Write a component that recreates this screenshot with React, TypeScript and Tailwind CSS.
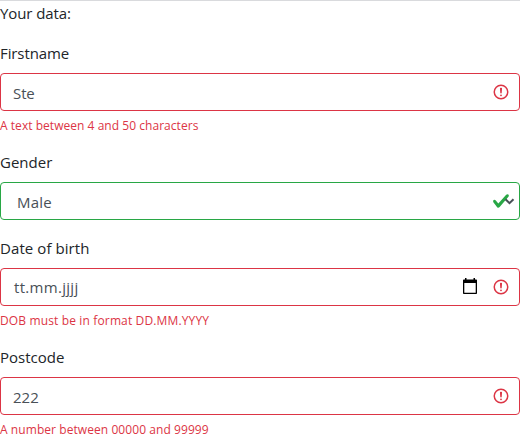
import type { ReactNode } from "react";

function InvalidIcon() {
  return (
    <svg className="h-[18px] w-[18px] shrink-0" viewBox="0 0 12 12" fill="none" stroke="#dc3545">
      <circle cx="6" cy="6" r="4.5" />
      <path strokeLinejoin="round" d="M5.8 3.6h.4L6 6.5z" />
      <circle cx="6" cy="8.2" r=".6" fill="#dc3545" stroke="none" />
    </svg>
  );
}

function ValidIcon() {
  return (
    <svg className="h-[18px] w-[18px] shrink-0" viewBox="0 0 8 8">
      <path
        fill="#28a745"
        d="M2.3 6.73L.6 4.53c-.4-1.04.46-1.4 1.1-.8l1.1 1.4 3.4-3.8c.6-.63 1.6-.27 1.2.7l-4 4.6c-.43.5-.8.4-1.1.1z"
      />
    </svg>
  );
}

function CalendarIcon() {
  return (
    <svg className="mr-[14px] mb-0.5 h-[18px] w-4 shrink-0" viewBox="0 0 16 18">
      <path
        fill="#000"
        fillRule="evenodd"
        d="M3 1h1.5v1.5h7V1H13v1.5h1.2c.5 0 .8.4.8.8v12.9c0 .5-.3.8-.8.8H1.8c-.5 0-.8-.3-.8-.8V3.3c0-.4.3-.8.8-.8H3zM2.3 6v9.7h11.4V6z"
      />
    </svg>
  );
}

interface FieldProps {
  label: string;
  labelClass?: string;
  valid?: boolean;
  feedback?: string;
  feedbackClass?: string;
  children: ReactNode;
}

function Field({ label, labelClass = "", valid, feedback, feedbackClass = "", children }: FieldProps) {
  return (
    <div className="mb-4">
      <div className={`mb-2 h-6 whitespace-nowrap leading-6 ${labelClass}`}>{label}</div>
      <div
        className={`relative flex h-[38px] items-center rounded border bg-white pr-[9px] pl-3 text-[#495057] ${
          valid ? "border-[#28a745]" : "border-[#dc3545]"
        }`}
      >
        {children}
        {valid ? <ValidIcon /> : <InvalidIcon />}
      </div>
      {feedback && (
        <div
          className={`mt-1 h-[19.2px] whitespace-nowrap pt-px text-[12px] leading-[19.2px] text-[#dc3545] ${feedbackClass}`}
        >
          {feedback}
        </div>
      )}
    </div>
  );
}

export default function App() {
  return (
    <div className="h-[439px] overflow-hidden border-t border-[#d9dadd] bg-white font-['Open_Sans','Noto_Sans',sans-serif] text-[15px] text-[#212529]">
      <p className="mb-4 h-6 leading-6 tracking-[-0.1px]">Your data:</p>
      <Field
        label="Firstname"
        labelClass="tracking-[-0.1px]"
        feedback="A text between 4 and 50 characters"
        feedbackClass="tracking-[0.04px]"
      >
        <span className="flex-1 pt-0.5 tracking-[-0.1px]">Ste</span>
      </Field>
      <Field label="Gender" valid>
        <span className="flex-1 pt-0.5 pl-1 tracking-[0.2px]">Male</span>
        <svg className="absolute top-[15px] right-1 h-[7px] w-[11px]" viewBox="0 0 11 7">
          <path d="M1.5 1.2 5.5 5.2 9.5 1.2" fill="none" stroke="#495057" strokeWidth="2" />
        </svg>
      </Field>
      <Field
        label="Date of birth"
        labelClass="tracking-[0.08px]"
        feedback="DOB must be in format DD.MM.YYYY"
        feedbackClass="tracking-[0.14px]"
      >
        <span className="flex-1 pl-px tracking-[0.3px]">tt.mm.jjjj</span>
        <CalendarIcon />
      </Field>
      <Field
        label="Postcode"
        feedback="A number between 00000 and 99999"
        feedbackClass="tracking-[0.07px]"
      >
        <span className="flex-1 pt-0.5">222</span>
      </Field>
    </div>
  );
}
